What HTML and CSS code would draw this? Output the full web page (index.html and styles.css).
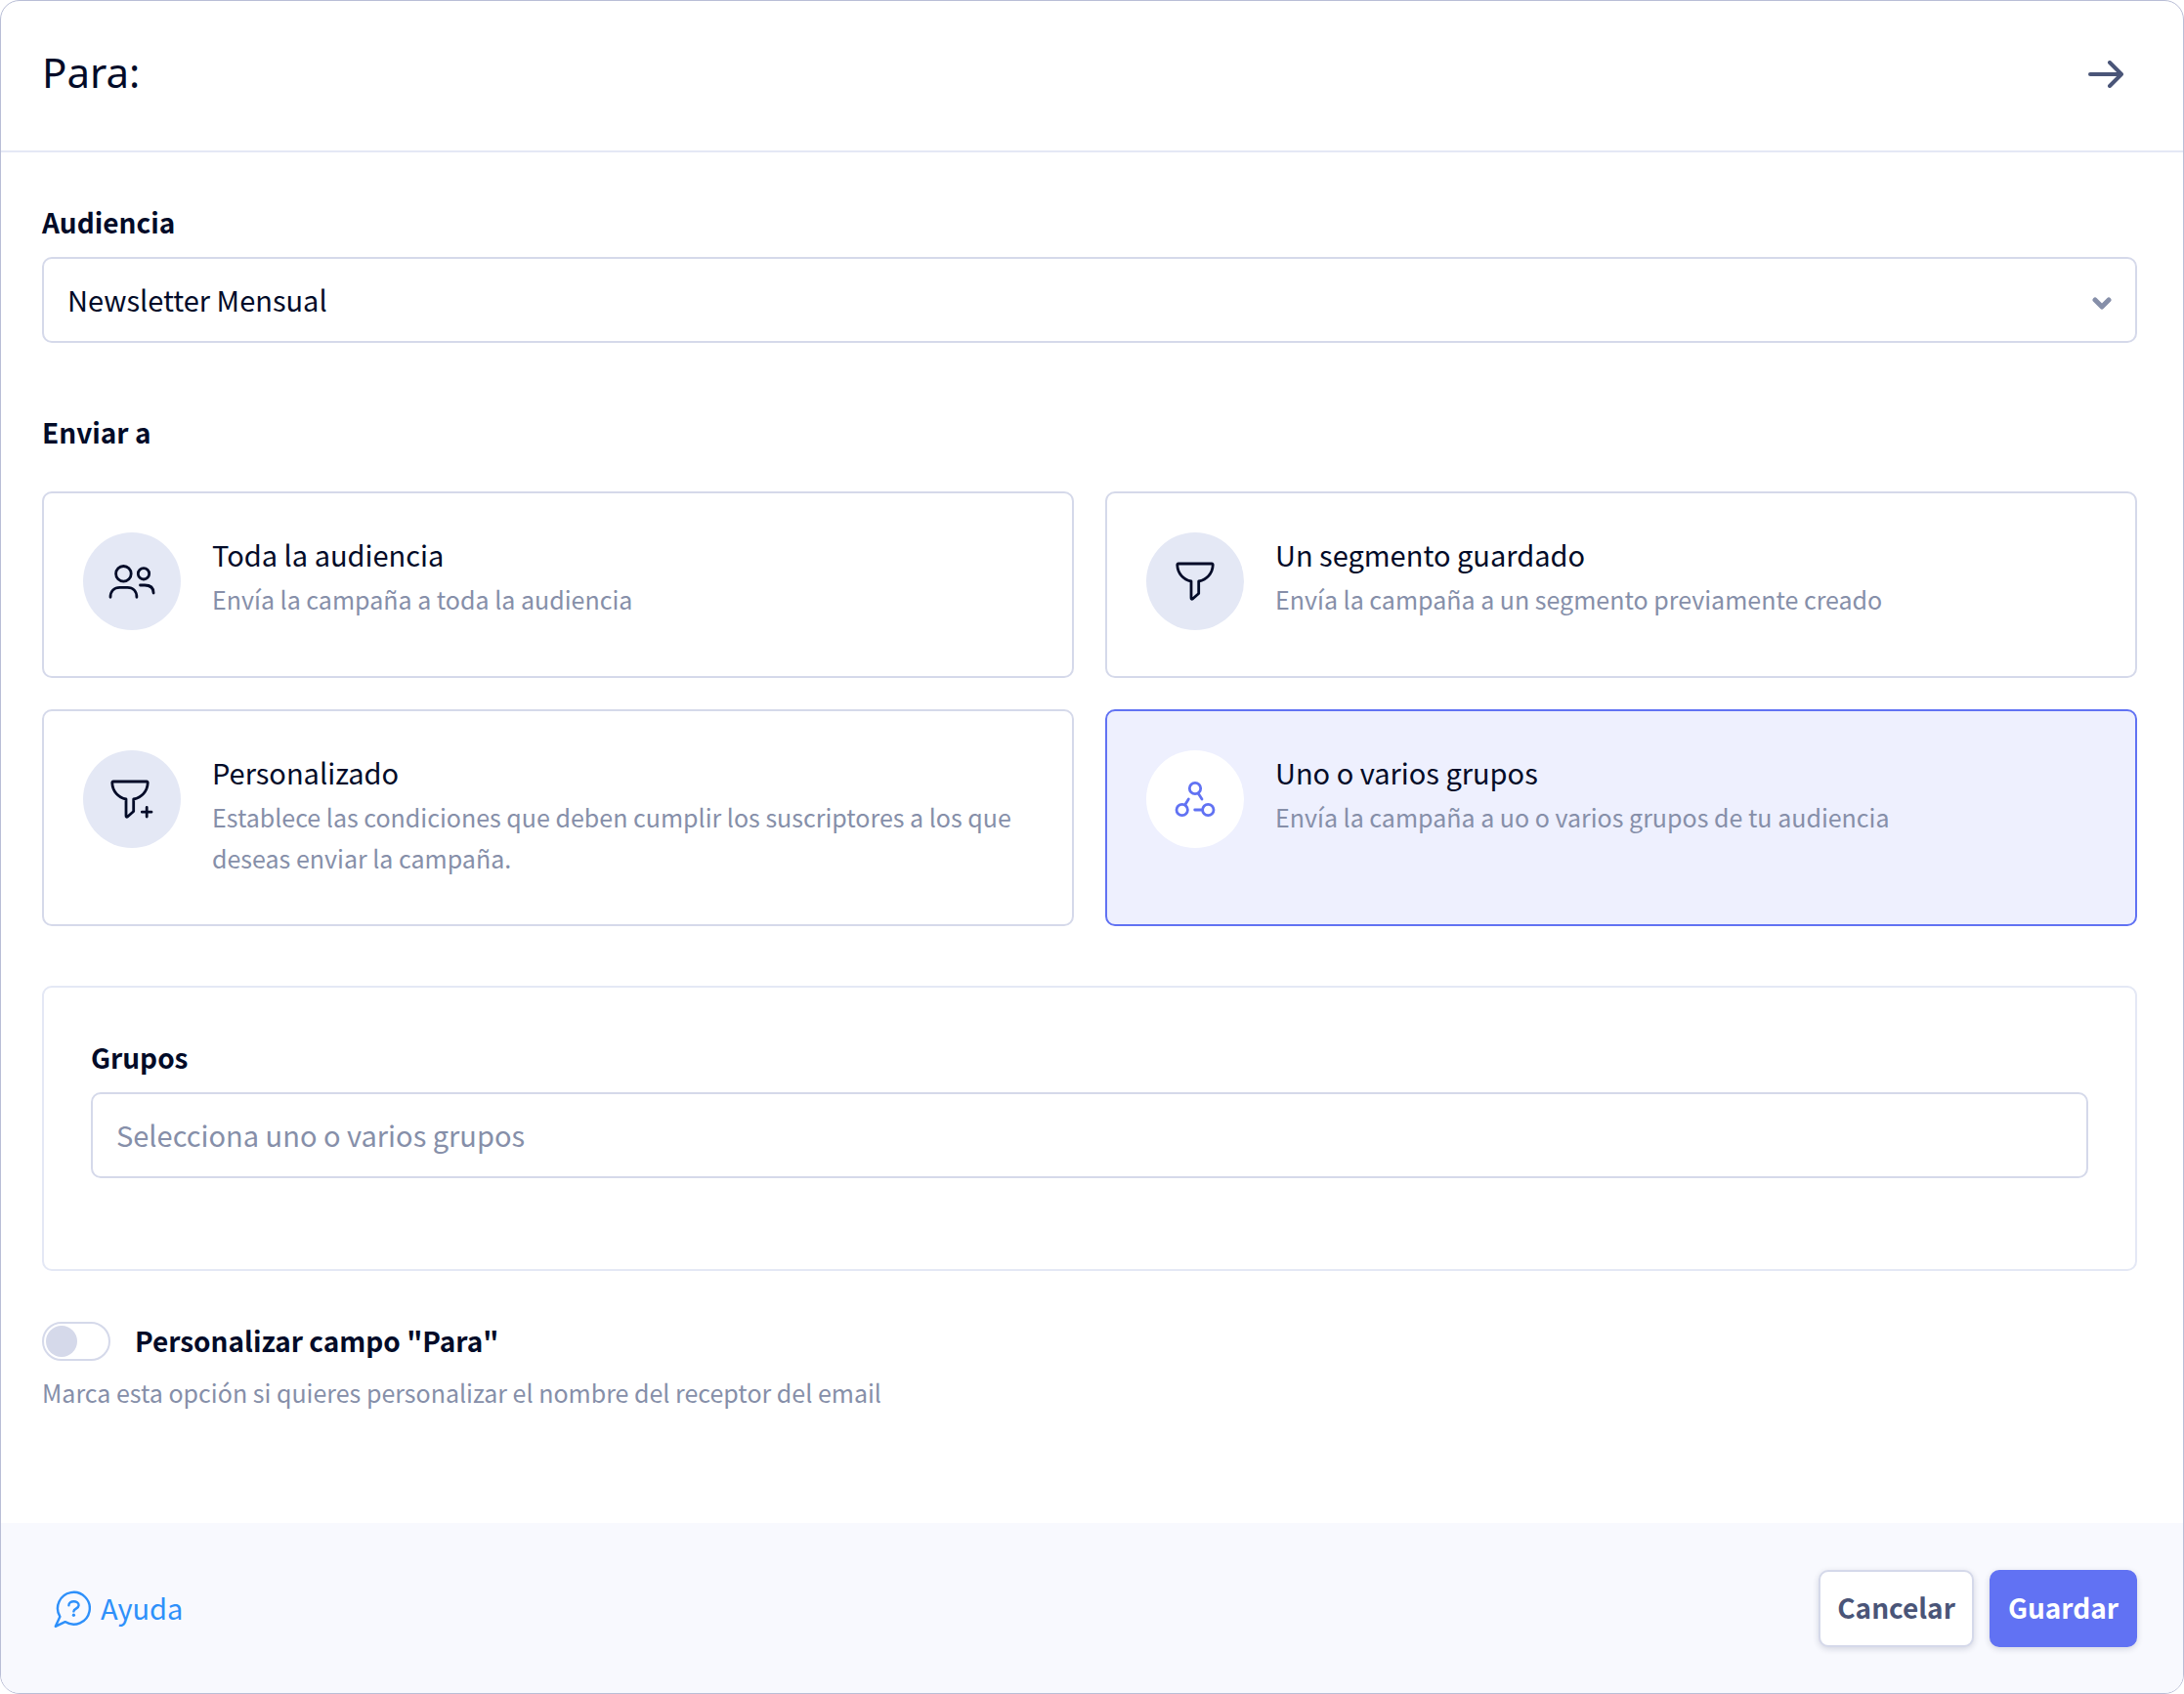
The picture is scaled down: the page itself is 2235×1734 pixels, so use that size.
FILE: index.html
```html
<!DOCTYPE html>
<html lang="es">
<head>
  <meta charset="utf-8">
  <meta name="viewport" content="width=device-width, initial-scale=1">
  <title>Para:</title>
  <link rel="stylesheet" href="styles.css">
</head>
<body>
  <form class="panel">
    <header class="panel-header">
      <h1 class="panel-title">Para:</h1>
      <button class="icon-button" type="button" aria-label="Continuar">
        <svg width="36" height="28" viewBox="0 0 36 28" fill="none" stroke="currentColor" stroke-width="4" stroke-linecap="round" stroke-linejoin="round"><path d="M2 14H34M22 2L34 14L22 26"/></svg>
      </button>
    </header>

    <main class="panel-body">
      <div class="field">
        <label class="field-label" for="audience">Audiencia</label>
        <div class="select">
          <select class="control" id="audience">
            <option>Newsletter Mensual</option>
          </select>
          <svg class="select-arrow" width="20" height="14" viewBox="0 0 20 14" fill="none" stroke="currentColor" stroke-width="5" stroke-linecap="round" stroke-linejoin="round"><path d="M3 3L10 10L17 3"/></svg>
        </div>
      </div>

      <fieldset class="targets">
        <legend class="field-label targets-label">Enviar a</legend>
        <div class="target-grid">
          <label class="target">
            <input class="target-input" type="radio" name="target">
            <svg class="target-icon" viewBox="0 0 100 100"><circle cx="41.4" cy="42.3" r="7.8"/><circle cx="62" cy="42.3" r="5.7"/><path d="M28 66.3C28 60 32 56.3 37.5 56.3H45.5C51 56.3 54.9 60 54.9 66.3M58.5 54H63C69 54 72.1 57 72.1 62"/></svg>
            <span class="target-text">
              <span class="target-title">Toda la audiencia</span>
              <span class="hint">Envía la campaña a toda la audiencia</span>
            </span>
          </label>
          <label class="target">
            <input class="target-input" type="radio" name="target">
            <svg class="target-icon" viewBox="0 0 100 100"><path d="M33 32H67Q68.3 32 68.2 33.5C67.8 42 62 48.5 53.7 50V62.5L47.5 68Q46 68.8 46 67V50C38 48.5 32.2 42 31.8 33.5Q31.7 32 33 32Z"/></svg>
            <span class="target-text">
              <span class="target-title">Un segmento guardado</span>
              <span class="hint">Envía la campaña a un segmento previamente creado</span>
            </span>
          </label>
          <label class="target">
            <input class="target-input" type="radio" name="target">
            <svg class="target-icon" viewBox="0 0 100 100"><path d="M31 32H65Q66.3 32 66.2 33.5C65.8 42 60 48.5 51.7 50V62.5L45.5 68Q44 68.8 44 67V50C36 48.5 30.2 42 29.8 33.5Q29.7 32 31 32ZM60.3 63.2H70M65.2 58.3V68"/></svg>
            <span class="target-text">
              <span class="target-title">Personalizado</span>
              <span class="hint">Establece las condiciones que deben cumplir los suscriptores a los que deseas enviar la campaña.</span>
            </span>
          </label>
          <label class="target">
            <input class="target-input" type="radio" name="target" checked>
            <svg class="target-icon" viewBox="0 0 100 100"><circle cx="50" cy="39" r="5.7"/><circle cx="36.7" cy="61" r="5.7"/><circle cx="63.3" cy="61" r="5.7"/><path d="M53.3 44.3L57 50M39.8 55.8L43.3 50M49.7 61H57.5"/></svg>
            <span class="target-text">
              <span class="target-title">Uno o varios grupos</span>
              <span class="hint">Envía la campaña a uo o varios grupos de tu audiencia</span>
            </span>
          </label>
        </div>
      </fieldset>

      <section class="groups">
        <label class="field-label" for="groups">Grupos</label>
        <input class="control" id="groups" type="text" placeholder="Selecciona uno o varios grupos">
      </section>

      <div class="switch-row">
        <input class="switch" id="customize" type="checkbox" role="switch" aria-describedby="customize-hint">
        <label class="switch-label" for="customize">Personalizar campo "Para"</label>
      </div>
      <p class="hint" id="customize-hint">Marca esta opción si quieres personalizar el nombre del receptor del email</p>
    </main>

    <footer class="panel-footer">
      <a class="help" href="#ayuda">
        <svg width="38" height="38" viewBox="0 0 38 38" fill="none" stroke="currentColor" stroke-width="2.4" stroke-linecap="round" stroke-linejoin="round"><path d="M6.4 26.8A16.4 16.4 0 1 1 11.6 32.1L1.8 36.8Z"/><path d="M15.4 15.3C15.4 9.9 25.6 9.9 25.6 15.3C25.6 18.6 20.4 18.6 20.4 21.4"/><path d="M20.4 25.2V25.3" stroke-width="3.2"/></svg>
        <span class="help-text">Ayuda</span>
      </a>
      <div class="actions">
        <button class="button button-secondary" type="button">Cancelar</button>
        <button class="button button-primary" type="submit">Guardar</button>
      </div>
    </footer>
  </form>
</body>
</html>
```
FILE: styles.css
```css
:root {
  --ink: #020b28;
  --slate: #4a5578;
  --muted: #868fa9;
  --line: #d5d9ea;
  --line-soft: #e4e8f5;
  --accent: #6172f3;
  --link: #2e90fa;
}

* {
  box-sizing: border-box;
}

body {
  margin: 0;
  background: #fff;
  color: var(--ink);
  font-family: "Noto Sans CJK JP", "Noto Sans", sans-serif;
  font-size: 29px;
  line-height: 42px;
}

button,
input,
select {
  font: inherit;
}

.panel {
  display: flex;
  flex-direction: column;
  min-height: 100vh;
  border: 1px solid #b9bed6;
  border-radius: 20px;
  background: #fff;
  overflow: hidden;
}

.panel-header {
  display: flex;
  align-items: center;
  justify-content: space-between;
  padding: 42px 61px 45px 42px;
  border-bottom: 2px solid var(--line-soft);
}

.panel-title {
  margin: 0;
  padding-bottom: 4px;
  font-family: "Noto Sans", sans-serif;
  font-size: 42px;
  font-weight: 400;
  line-height: 62px;
}

.icon-button {
  display: flex;
  padding: 0;
  border: 0;
  background: none;
  color: var(--slate);
}

.panel-body {
  flex: 1;
  padding: 50px 47px 48px 42px;
}

.field {
  margin-bottom: 70px;
}

.field-label {
  display: block;
  margin-bottom: 15px;
  padding: 0;
  font-size: 28px;
  font-weight: 600;
}

.control {
  display: block;
  width: 100%;
  height: 88px;
  padding: 0 24px 2px;
  border: 2px solid var(--line);
  border-radius: 10px;
  background: #fff;
  color: inherit;
  appearance: none;
}

.control::placeholder {
  color: var(--muted);
  opacity: 1;
}

.select {
  display: grid;
  align-items: center;
}

.select > * {
  grid-area: 1 / 1;
}

.select-arrow {
  justify-self: end;
  margin: 8px 26px 0 0;
  color: var(--muted);
  pointer-events: none;
}

.targets {
  min-width: 0;
  margin: 0 0 61px;
  padding: 0;
  border: 0;
}

.targets-label {
  margin-bottom: 40px;
}

.target-grid {
  display: grid;
  grid-template-columns: 1fr 1fr;
  gap: 32px;
}

.target {
  position: relative;
  display: flex;
  align-items: flex-start;
  gap: 32px;
  padding: 40px 40px 47px;
  border: 2px solid var(--line);
  border-radius: 10px;
}

.target-input {
  position: absolute;
  opacity: 0;
}

.target-icon {
  flex: none;
  width: 100px;
  height: 100px;
  border-radius: 50%;
  background: var(--line-soft);
  fill: none;
  stroke: currentColor;
  stroke-width: 2.8;
  stroke-linecap: round;
  stroke-linejoin: round;
}

.target-text {
  display: flex;
  flex-direction: column;
}

.target-title {
  padding-bottom: 2px;
  line-height: 45px;
}

.target:has(:checked) {
  border-color: var(--accent);
  background: #eef0fe;
}

.target:has(:checked) .target-icon {
  background: #fff;
  color: var(--accent);
}

.hint {
  margin: 0;
  color: var(--muted);
  font-size: 25px;
}

.groups {
  margin-bottom: 52px;
  padding: 50px 48px 93px;
  border: 2px solid var(--line-soft);
  border-radius: 10px;
}

.switch-row {
  display: flex;
  align-items: center;
  gap: 25px;
  margin-bottom: 11px;
}

.switch {
  display: flex;
  width: 70px;
  height: 40px;
  margin: 0;
  padding: 2px;
  border: 2px solid var(--line);
  border-radius: 20px;
  background: #fff;
  appearance: none;
}

.switch::before {
  content: "";
  width: 32px;
  height: 32px;
  border-radius: 50%;
  background: var(--line);
}

.switch:checked {
  justify-content: flex-end;
}

.switch-label {
  padding-bottom: 2px;
  font-size: 28px;
  font-weight: 600;
  line-height: 38px;
}

.panel-footer {
  display: flex;
  align-items: center;
  justify-content: space-between;
  padding: 48px 47px 47px 54px;
  background: #f8f9fe;
}

.help {
  display: flex;
  align-items: center;
  gap: 10px;
  color: var(--link);
  text-decoration: none;
}

.help-text {
  padding-bottom: 4px;
}

.actions {
  display: flex;
  gap: 16px;
}

.button {
  padding: 15px 17px 18px;
  border: 2px solid;
  border-radius: 10px;
  box-shadow: 0 2px 6px rgb(16 24 60 / 16%);
  font-size: 28px;
  font-weight: 600;
}

.button-secondary {
  border-color: var(--line);
  background: #fff;
  color: var(--slate);
}

.button-primary {
  border-color: var(--accent);
  background: var(--accent);
  color: #fff;
}
```
